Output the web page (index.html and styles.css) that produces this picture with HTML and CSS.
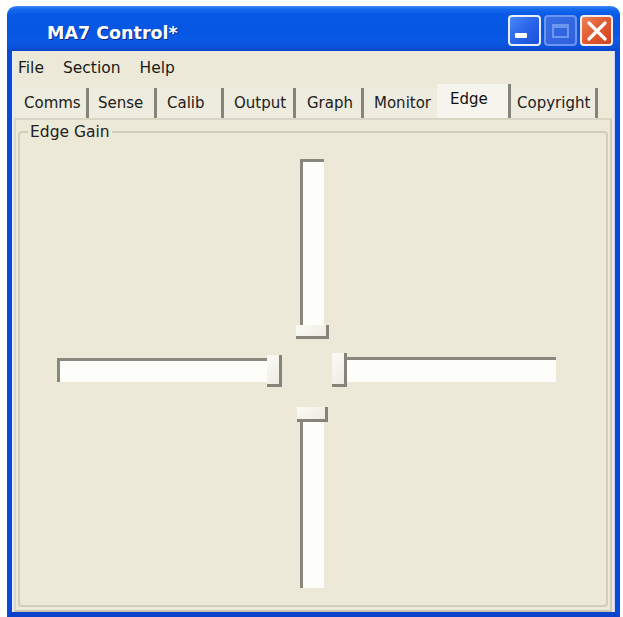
FILE: index.html
```html
<!DOCTYPE html>
<html>
<head>
<meta charset="utf-8">
<title>MA7 Control*</title>
<link rel="stylesheet" href="styles.css">
</head>
<body>
<div class="window">
  <div class="titlebar">
    <span class="title">MA7 Control*</span>
    <div class="controls">
      <span class="btn btn-min"><span class="min-bar"></span></span>
      <span class="btn btn-max"><span class="max-box"></span></span>
      <span class="btn btn-close">
        <svg width="22" height="20" viewBox="0 0 22 20"><path d="M3 2 L19 18 M19 2 L3 18" stroke="#fff" stroke-width="3.2" stroke-linecap="round" fill="none"/></svg>
      </span>
    </div>
  </div>
  <div class="frame">
    <div class="menubar">
      <span class="menu-item">File</span>
      <span class="menu-item">Section</span>
      <span class="menu-item">Help</span>
    </div>
    <div class="tabs">
      <span class="tab tab-comms">Comms</span>
      <span class="tab tab-sense">Sense</span>
      <span class="tab tab-calib">Calib</span>
      <span class="tab tab-output">Output</span>
      <span class="tab tab-graph">Graph</span>
      <span class="tab tab-monitor">Monitor</span>
      <span class="tab tab-edge selected">Edge</span>
      <span class="tab tab-copyright">Copyright</span>
    </div>
    <div class="panel">
      <fieldset class="group">
        <legend>Edge Gain</legend>
        <div class="cross">
          <div class="slider v-top">
            <div class="track"></div>
            <div class="thumb"></div>
          </div>
          <div class="slider h-left">
            <div class="track"></div>
            <div class="thumb"></div>
          </div>
          <div class="slider h-right">
            <div class="thumb"></div>
            <div class="track"></div>
          </div>
          <div class="slider v-bottom">
            <div class="thumb"></div>
            <div class="track"></div>
          </div>
        </div>
      </fieldset>
    </div>
  </div>
</div>
</body>
</html>
```

FILE: styles.css
```css
html, body {
  margin: 0;
  padding: 0;
  background: #ffffff;
}

body {
  font-family: "DejaVu Sans", "Liberation Sans", sans-serif;
  color: #1a1a1a;
}

.window {
  margin: 6px 0 0 7px;
  width: 613px;
  height: 611px;
  display: flex;
  flex-direction: column;
}

.titlebar {
  height: 45px;
  flex: none;
  border-radius: 9px 9px 0 0;
  background: linear-gradient(to bottom, #3f8cf6 0%, #1569ee 7%, #0858e6 20%, #0656e4 55%, #0a5ae6 75%, #0a50da 92%, #0a44c8 100%);
  display: flex;
  align-items: flex-start;
  justify-content: space-between;
  box-sizing: border-box;
  padding: 9px 7px 0 40px;
}

.title {
  font-family: "DejaVu Sans", sans-serif;
  font-weight: bold;
  font-size: 17.5px;
  color: #ffffff;
  line-height: 36px;
  text-shadow: 1px 1px 0 #0a2a8a;
  margin-top: -9px;
  padding-top: 9px;
}

.controls {
  display: flex;
  gap: 3px;
}

.btn {
  width: 33px;
  height: 31px;
  box-sizing: border-box;
  border-radius: 4px;
  display: flex;
}

.btn-min {
  border: 2px solid #e8effc;
  background: linear-gradient(135deg, #4a88f7 0%, #2a64ea 50%, #1a50d8 100%);
  align-items: flex-end;
  padding: 0 0 6px 5px;
}

.min-bar {
  width: 12px;
  height: 5px;
  background: #ffffff;
  border-radius: 1px;
}

.btn-max {
  border: 2px solid #6b95ee;
  background: linear-gradient(135deg, #3a6fe6 0%, #2c5fdd 100%);
  align-items: center;
  justify-content: center;
}

.max-box {
  width: 17px;
  height: 14px;
  box-sizing: border-box;
  border: 2px solid #6d97ef;
  border-top-width: 4px;
}

.btn-close {
  border: 2px solid #f4ece8;
  background: linear-gradient(135deg, #ec8156 0%, #e05a30 50%, #cf4420 100%);
  align-items: center;
  justify-content: center;
}

.frame {
  flex: 1;
  display: flex;
  flex-direction: column;
  background: #ece9d8;
  border-left: 5px solid #0a4ad8;
  border-right: 5px solid #0a4ad8;
  border-bottom: 5px solid #0a42cc;
  box-shadow: inset 1px 0 0 #e8f0ff, inset -1px 0 0 #c8d4f0;
}

.menubar {
  height: 33px;
  flex: none;
  display: flex;
  align-items: center;
  padding-left: 6px;
  gap: 19px;
  font-size: 15.5px;
}

.tabs {
  height: 34px;
  flex: none;
  display: flex;
  align-items: flex-end;
  padding-left: 4px;
  font-size: 15px;
}

.tab {
  height: 30px;
  box-sizing: border-box;
  display: flex;
  align-items: center;
  padding-left: 9px;
  background: #eeebdf;
  border-right: 3px solid #85837a;
  color: #202020;
}

.tab-comms { width: 73px; padding-left: 8px; }
.tab-sense { width: 68px; }
.tab-calib { width: 67px; padding-left: 10px; }
.tab-output { width: 72px; padding-left: 10px; }
.tab-graph { width: 68px; padding-left: 11px; }
.tab-monitor { width: 73px; padding-left: 10px; border-right: none; }
.tab-edge { width: 74px; padding-left: 13px; }
.tab-copyright { width: 87px; padding-left: 6px; }

.tab.selected {
  height: 34px;
  background: #f5f4ed;
  padding-bottom: 5px;
  color: #111;
}

.panel {
  flex: 1;
  display: flex;
  flex-direction: column;
  margin: 0 3px 0 2px;
  border: 2px solid #dad6c5;
  border-bottom-color: #c8c4b2;
  border-right-color: #cfcbba;
  padding: 3px 2px 3px 2px;
}

.group {
  flex: 1;
  margin: 0;
  border: 2px solid #d2ceba;
  border-radius: 4px;
  padding: 18px 8px 0 8px;
  min-width: 0;
}

.group legend {
  font-size: 15.5px;
  line-height: 18px;
  padding: 0 2px;
  color: #222;
}

.cross {
  margin-left: 29px;
  display: grid;
  grid-template-columns: 225px 14px 33px 3px 224px;
  grid-template-rows: 180px 14px 34px 20px 181px;
}

.slider .track {
  background: #fdfdfa;
  box-sizing: border-box;
}

.slider .thumb {
  background: linear-gradient(135deg, #fbfaf5 0%, #eeece2 100%);
  box-sizing: border-box;
  border-right: 3px solid #86847a;
  border-bottom: 3px solid #86847a;
}

/* top vertical slider */
.v-top {
  grid-column: 3;
  grid-row: 1;
  display: flex;
  flex-direction: column;
}

.v-top .track {
  width: 24px;
  height: 166px;
  margin-left: 4px;
  border-top: 3px solid #8a887e;
  border-left: 3px solid #8a887e;
}

.v-top .thumb {
  width: 33px;
  height: 14px;
}

/* bottom vertical slider */
.v-bottom {
  grid-column: 3;
  grid-row: 5;
  display: flex;
  flex-direction: column;
}

.v-bottom .thumb {
  width: 31px;
  height: 15px;
  margin-left: 1px;
}

.v-bottom .track {
  width: 24px;
  height: 166px;
  margin-left: 4px;
  border-left: 3px solid #8a887e;
}

/* left horizontal slider */
.h-left {
  grid-column: 1;
  grid-row: 3;
  display: flex;
  align-items: flex-start;
}

.h-left .track {
  width: 210px;
  height: 24px;
  margin-top: 5px;
  border-top: 3px solid #8a887e;
  border-left: 3px solid #8a887e;
}

.h-left .thumb {
  width: 15px;
  height: 32px;
  margin-top: 2px;
}

/* right horizontal slider */
.h-right {
  grid-column: 5;
  grid-row: 3;
  display: flex;
  align-items: flex-start;
}

.h-right .thumb {
  width: 15px;
  height: 34px;
}

.h-right .track {
  width: 209px;
  height: 25px;
  margin-top: 4px;
  border-top: 3px solid #8a887e;
}
```
